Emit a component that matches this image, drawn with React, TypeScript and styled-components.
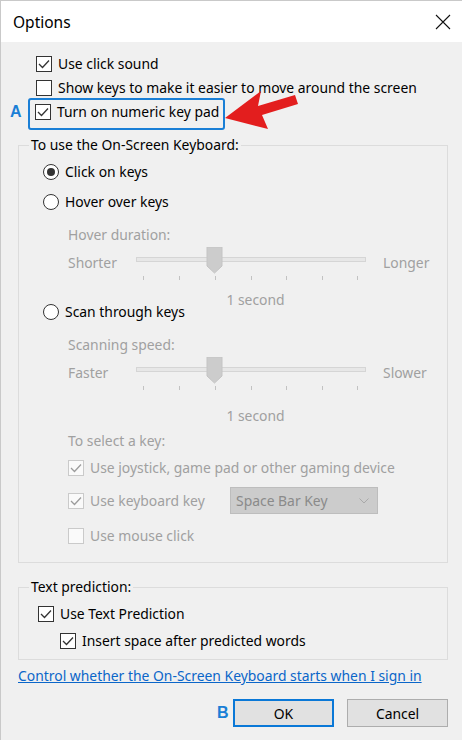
import * as React from "react";
import styled, { createGlobalStyle } from "styled-components";

const GlobalStyle = createGlobalStyle`
  html, body {
    margin: 0;
    padding: 0;
    background: #f0f0f0;
  }

  body {
    font-family: "Noto Sans", "Segoe UI", sans-serif;
  }
`;

const TEXT = "#000000";
const DISABLED = "#a0a0a0";
const BLUE = "#1a7fd6";

type CheckProps = { checked?: boolean; disabled?: boolean };

const Box = styled.span<{ $disabled?: boolean }>`
  display: inline-flex;
  flex: none;
  width: 16px;
  height: 16px;
  box-sizing: border-box;
  border: 1px solid ${(p) => (p.$disabled ? "#cacaca" : "#333333")};
  background: ${(p) => (p.$disabled ? "#fafafa" : "#ffffff")};
`;

const Checkbox = ({ checked, disabled }: CheckProps) => (
  <Box $disabled={disabled}>
    {checked && (
      <svg width="14" height="14" viewBox="0 0 14 14">
        <polyline
          points="2,7 5.5,10.5 12,3.5"
          fill="none"
          stroke={disabled ? "#9c9c9c" : "#333333"}
          strokeWidth="1.3"
        />
      </svg>
    )}
  </Box>
);

const RadioCircle = styled.span`
  display: inline-flex;
  flex: none;
  align-items: center;
  justify-content: center;
  width: 16px;
  height: 16px;
  box-sizing: border-box;
  border: 1px solid #333333;
  border-radius: 50%;
  background: #ffffff;

  span {
    width: 8px;
    height: 8px;
    border-radius: 50%;
    background: #333333;
  }
`;

const Radio = ({ checked }: { checked?: boolean }) => (
  <RadioCircle>{checked && <span />}</RadioCircle>
);

const Window = styled.div`
  position: relative;
  width: 462px;
  height: 740px;
  box-sizing: border-box;
  border-top: 1px solid #c9c9c9;
  border-left: 1px solid #c9c9c9;
  background: #f0f0f0;
  display: flex;
  flex-direction: column;
  font-size: 13.9px;
  color: ${TEXT};
  overflow: hidden;
`;

const TitleBar = styled.div`
  height: 41px;
  flex: none;
  background: #ffffff;
  display: flex;
  align-items: center;
  justify-content: space-between;
  padding: 0 11px 0 12px;
`;

const Title = styled.div`
  font-size: 15.5px;
  line-height: 20px;
  margin-top: 1px;
`;

const Body = styled.div`
  display: flex;
  flex-direction: column;
  padding: 0 14px 0 17px;
`;

const Option = styled.div<{ $mt?: number; $ml?: number; $disabled?: boolean; $h?: number }>`
  display: flex;
  align-items: center;
  gap: 6px;
  height: ${(p) => p.$h ?? 16}px;
  line-height: 16px;
  white-space: nowrap;
  margin-top: ${(p) => p.$mt ?? 0}px;
  margin-left: ${(p) => p.$ml ?? 0}px;
  color: ${(p) => (p.$disabled ? DISABLED : TEXT)};
`;

const OptionLabel = styled.span<{ $w?: number }>`
  ${(p) => (p.$w ? `width: ${p.$w}px;` : "")}
`;

const AnnotatedRow = styled.div`
  display: flex;
  align-items: flex-start;
  gap: 8px;
  margin-top: 2px;
  margin-left: -8px;
`;

const Marker = styled.span<{ $pt?: number }>`
  width: 10px;
  padding-top: ${(p) => p.$pt ?? 0}px;
  font-size: 16px;
  line-height: 16px;
  font-weight: 700;
  color: ${BLUE};
  font-family: "Liberation Sans", Arial, sans-serif;
`;

const Highlight = styled.div`
  width: 197px;
  height: 32px;
  box-sizing: border-box;
  border: 2px solid ${BLUE};
  border-radius: 3px;
  padding: 4px 0 0 5px;
`;

const Group = styled.fieldset<{ $mt: number }>`
  margin: ${(p) => p.$mt}px 0 0 0;
  padding: 0;
  min-width: 0;
  border: 1px solid #dcdcdc;
`;

const Legend = styled.legend`
  margin-left: 10px;
  padding: 0 2px;
  line-height: 20px;
`;

const GroupContent = styled.div<{ $pt: number; $pl: number; $pb: number }>`
  display: flex;
  flex-direction: column;
  padding: ${(p) => `${p.$pt}px 16px ${p.$pb}px ${p.$pl}px`};
`;

const Sub = styled.div<{ $mt?: number; $ml?: number }>`
  line-height: 20px;
  height: 20px;
  color: ${DISABLED};
  margin-top: ${(p) => p.$mt ?? 0}px;
  margin-left: ${(p) => p.$ml ?? 25}px;
  white-space: nowrap;
`;

const Value = styled(Sub)`
  width: 255px;
  text-align: center;
  margin-left: 85px;
`;

const SliderRow = styled.div<{ $mt?: number }>`
  display: flex;
  height: 34px;
  margin-top: ${(p) => p.$mt ?? 0}px;
  margin-left: 25px;
  color: ${DISABLED};
`;

const SliderLabel = styled.span<{ $w?: number }>`
  width: ${(p) => (p.$w ? `${p.$w}px` : "auto")};
  margin-top: 6px;
  line-height: 20px;
  height: 20px;
`;

const TICKS = [15, 51, 87, 123, 158, 194, 229];

const Track = ({ value }: { value: number }) => {
  const x = TICKS[value];
  return (
    <svg width="255" height="34" viewBox="0 0 255 34">
      <rect x="8.5" y="10.5" width="229" height="4" fill="#e7e7e7" stroke="#d5d5d5" />
      {TICKS.map((t) => (
        <line key={t} x1={t + 0.5} x2={t + 0.5} y1="29" y2="33" stroke="#c2c2c2" />
      ))}
      <polygon
        points={`${x - 8},0 ${x + 7},0 ${x + 7},19 ${x - 0.5},26 ${x - 8},19`}
        fill="#cccccc"
        stroke="#c4c4c4"
      />
    </svg>
  );
};

const Slider = ({ mt, left, right, value }: { mt: number; left: string; right: string; value: number }) => (
  <SliderRow $mt={mt}>
    <SliderLabel $w={60}>{left}</SliderLabel>
    <Track value={value} />
    <SliderLabel>{right}</SliderLabel>
  </SliderRow>
);

const Select = styled.div`
  display: flex;
  align-items: center;
  justify-content: space-between;
  width: 148px;
  height: 27px;
  box-sizing: border-box;
  border: 1px solid #bdbdbd;
  background: #cccccc;
  color: #8a8a8a;
  padding: 0 8px 0 5px;
`;

const Link = styled.a`
  margin-top: 6px;
  line-height: 20px;
  color: #0b66c9;
  text-decoration: underline;
  white-space: nowrap;
  cursor: pointer;
`;

const Buttons = styled.div`
  display: flex;
  justify-content: flex-end;
  align-items: center;
  margin-top: 13px;
`;

const Button = styled.button<{ $default?: boolean }>`
  width: 101px;
  height: 28px;
  box-sizing: border-box;
  margin-left: ${(p) => (p.$default ? 6 : 13)}px;
  border: ${(p) => (p.$default ? `2px solid #0a78d7` : "1px solid #adadad")};
  background: #e1e1e1;
  font: inherit;
  color: ${TEXT};
  padding: 0;
`;

const Arrow = styled.svg`
  position: absolute;
  left: 220px;
  top: 85px;
`;

const App = () => {
  return (
    <Window>
      <GlobalStyle />
      <TitleBar>
        <Title>Options</Title>
        <svg width="16" height="16" viewBox="0 0 16 16">
          <path d="M1 1 L15 15 M15 1 L1 15" stroke="#111" strokeWidth="1.1" />
        </svg>
      </TitleBar>

      <Body>
        <Option $mt={14} $ml={18}>
          <Checkbox checked />
          <OptionLabel>Use click sound</OptionLabel>
        </Option>
        <Option $mt={8} $ml={18}>
          <Checkbox />
          <OptionLabel>Show keys to make it easier to move around the screen</OptionLabel>
        </Option>
        <AnnotatedRow>
          <Marker $pt={6}>A</Marker>
          <Highlight>
            <Option>
              <Checkbox checked />
              <OptionLabel>Turn on numeric key pad</OptionLabel>
            </Option>
          </Highlight>
        </AnnotatedRow>

        <Group $mt={5}>
          <Legend>To use the On-Screen Keyboard:</Legend>
          <GroupContent $pt={9} $pl={24} $pb={18}>
            <Option>
              <Radio checked />
              <OptionLabel>Click on keys</OptionLabel>
            </Option>
            <Option $mt={14}>
              <Radio />
              <OptionLabel>Hover over keys</OptionLabel>
            </Option>
            <Sub $mt={15}>Hover duration:</Sub>
            <Slider mt={2} left="Shorter" right="Longer" value={2} />
            <Value $mt={9}>1 second</Value>
            <Option $mt={-6}>
              <Radio />
              <OptionLabel>Scan through keys</OptionLabel>
            </Option>
            <Sub $mt={15}>Scanning speed:</Sub>
            <Slider mt={2} left="Faster" right="Slower" value={2} />
            <Value $mt={15}>1 second</Value>
            <Sub $mt={5}>To select a key:</Sub>
            <Option $mt={9} $ml={25} $disabled>
              <Checkbox checked disabled />
              <OptionLabel>Use joystick, game pad or other gaming device</OptionLabel>
            </Option>
            <Option $mt={11} $ml={25} $h={27} $disabled>
              <Checkbox checked disabled />
              <OptionLabel $w={134}>Use keyboard key</OptionLabel>
              <Select>
                <span>Space Bar Key</span>
                <svg width="10" height="6" viewBox="0 0 10 6">
                  <polyline points="0.5,0.5 5,5 9.5,0.5" fill="none" stroke="#a9a9a9" />
                </svg>
              </Select>
            </Option>
            <Option $mt={14} $ml={25} $disabled>
              <Checkbox disabled />
              <OptionLabel>Use mouse click</OptionLabel>
            </Option>
          </GroupContent>
        </Group>

        <Group $mt={14}>
          <Legend>Text prediction:</Legend>
          <GroupContent $pt={9} $pl={19} $pb={10}>
            <Option>
              <Checkbox checked />
              <OptionLabel>Use Text Prediction</OptionLabel>
            </Option>
            <Option $mt={11} $ml={22}>
              <Checkbox checked />
              <OptionLabel>Insert space after predicted words</OptionLabel>
            </Option>
          </GroupContent>
        </Group>

        <Link>Control whether the On-Screen Keyboard starts when I sign in</Link>

        <Buttons>
          <Marker>B</Marker>
          <Button $default>OK</Button>
          <Button>Cancel</Button>
        </Buttons>
      </Body>

      <Arrow width="80" height="46" viewBox="0 0 80 46">
        <polygon points="4,32 40,5 37,20 74,9 77,18 41,29 47,43" fill="#e31e1e" />
      </Arrow>
    </Window>
  );
};

export default App;
